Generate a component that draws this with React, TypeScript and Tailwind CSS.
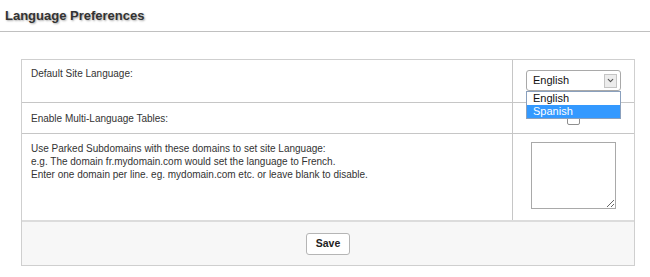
import { ChevronDown } from 'lucide-react';

const PARKED_HELP = [
  'Use Parked Subdomains with these domains to set site Language:',
  'e.g. The domain fr.mydomain.com would set the language to French.',
  'Enter one domain per line. eg. mydomain.com etc. or leave blank to disable.',
];

const LANGUAGES = ['English', 'Spanish'];

function LanguageSelect() {
  return (
    <div className="relative h-[21px] w-[95px]">
      <div className="flex h-full w-full items-center justify-between rounded-[3px] border border-[#a9a9a9] bg-white pl-[6px] pr-[3px]">
        <span className="text-[11px] leading-none text-[#111]">English</span>
        <span className="flex h-[14px] w-[13px] items-center justify-center border border-[#c4c4c4] bg-[#ececec]">
          <ChevronDown className="h-[9px] w-[9px] text-[#555]" strokeWidth={3} />
        </span>
      </div>
      {/* open option list */}
      <div className="absolute left-0 top-[21px] z-10 w-[95px] border border-[#8aa0bd] bg-white">
        {LANGUAGES.map((lang, i) => (
          <div
            key={lang}
            className={`h-[13px] pl-[6px] text-[11px] leading-[13px] ${
              i === 1 ? 'bg-[#3399ff] text-white' : 'text-[#111]'
            }`}
          >
            {lang}
          </div>
        ))}
      </div>
    </div>
  );
}

export default function App() {
  return (
    <div className="h-[277px] w-[650px] bg-white font-['Liberation_Sans',Arial,sans-serif] text-[#333]">
      <div className="border-b border-[#c0c0c0] pb-[7px] pl-[5px] pt-2">
        <h2 className="text-[13px] font-bold leading-4 text-[#333] [text-shadow:1px_1px_2px_#a8a8a8]">
          Language Preferences
        </h2>
      </div>

      <div className="ml-[21px] mt-[27px] w-[614px] border border-[#cfcfcf] text-[10px] leading-[13px]">
        <div className="flex h-[43px] border-b border-[#c6c6c6]">
          <div className="flex-1 border-r border-[#c6c6c6] pl-[9px] pt-[7px]">
            Default Site Language:
          </div>
          <div className="flex w-[121px] justify-center pt-[10px]">
            <LanguageSelect />
          </div>
        </div>

        <div className="flex h-[31px] border-b border-[#c6c6c6]">
          <div className="flex flex-1 items-center border-r border-[#c6c6c6] pl-[9px]">
            Enable Multi-Language Tables:
          </div>
          <div className="flex w-[121px] items-center justify-center">
            <span className="h-[13px] w-[13px] rounded-[2px] border border-[#8f8f8f] bg-white" />
          </div>
        </div>

        <div className="flex h-[86px]">
          <div className="flex-1 border-r border-[#c6c6c6] pl-[9px] pt-[8px]">
            {PARKED_HELP.map(line => (
              <div key={line}>{line}</div>
            ))}
          </div>
          <div className="flex w-[121px] justify-center pt-[8px]">
            <textarea className="h-[67px] w-[85px] border border-[#a9a9a9] bg-white" />
          </div>
        </div>

        <div className="flex h-[45px] items-center justify-center border-t-2 border-[#dcdcdc] bg-[#f7f7f7]">
          <button className="h-[22px] w-[44px] rounded-[3px] border border-[#b5b5b5] bg-white text-[10.5px] font-bold text-[#222]">
            Save
          </button>
        </div>
      </div>
    </div>
  );
}
